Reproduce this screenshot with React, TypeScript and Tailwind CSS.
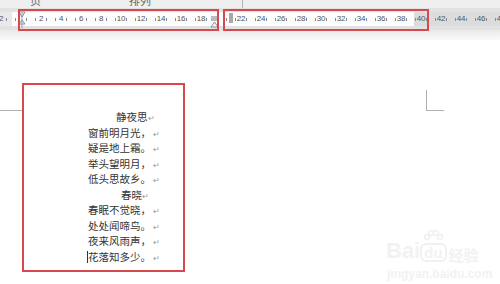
const poem: { text: string; indent: string; title?: boolean; cursor?: boolean }[] = [
  { text: "静夜思", indent: "pl-[28px]", title: true },
  { text: "窗前明月光，", indent: "pl-0" },
  { text: "疑是地上霜。", indent: "pl-0" },
  { text: "举头望明月，", indent: "pl-0" },
  { text: "低头思故乡。", indent: "pl-0" },
  { text: "春晓", indent: "pl-[33px]", title: true },
  { text: "春眠不觉晓，", indent: "pl-0" },
  { text: "处处闻啼鸟。", indent: "pl-0" },
  { text: "夜来风雨声，", indent: "pl-0" },
  { text: "花落知多少。", indent: "pl-0", cursor: true },
];

const marks = [-2, 0, 2, 4, 6, 8, 10, 12, 14, 16, 18, 20, 22, 24, 26, 28, 30, 32, 34, 36, 38, 40, 42, 44, 46, 48];

const Tick = () => <span className="w-px h-[3px] bg-[#8a8a8a]" />;

const Ruler = () => {
  return (
    <div className="relative h-[22px] bg-[#e2e2e2] py-[4px]">
      <div className="h-[14px] bg-[linear-gradient(to_right,#e9e9e9_21px,#fdfdfd_21px,#fdfdfd_423px,#dcdcdc_423px)] flex items-center -ml-[9px] overflow-hidden">
        {marks.map((n) => (
          <div key={n} className="w-[20px] shrink-0 flex items-center justify-between px-[4px]">
            <Tick />
            <span className="text-[8px] leading-none text-[#555] tracking-[-0.3px]">
              {n === 0 || n === 20 ? "" : Math.abs(n)}
            </span>
            <Tick />
          </div>
        ))}
      </div>
      {/* left indent marker */}
      <svg className="absolute left-[18px] top-[3px]" width="8" height="18" viewBox="0 0 8 18">
        <path d="M1 1 L7 1 L4 6 Z" fill="#f4f4f4" stroke="#7a7a7a" strokeWidth="0.8" />
        <path d="M4 9 L7 13 L1 13 Z" fill="#f4f4f4" stroke="#7a7a7a" strokeWidth="0.8" />
        <line x1="4" y1="2" x2="4" y2="17" stroke="#6c8fc4" strokeWidth="0.8" />
      </svg>
      {/* right indent marker */}
      <svg className="absolute left-[210px] top-[8px]" width="9" height="13" viewBox="0 0 9 13">
        <rect x="1" y="0" width="6" height="5" fill="#bcbcbc" />
        <path d="M4.5 6 L8 11 L1 11 Z" fill="#f6f6f6" stroke="#7a7a7a" strokeWidth="0.8" />
      </svg>
      {/* tab marker */}
      <div className="absolute left-[229px] top-[5px] w-[4px] h-[10px] bg-[#a9a9a9]" />
      {/* annotation boxes */}
      <div className="absolute left-[18px] top-[1px] w-[201px] h-[22px] border-2 border-[#d6494f]" />
      <div className="absolute left-[223px] top-[1px] w-[206px] h-[22px] border-2 border-[#d6494f]" />
    </div>
  );
};

const BaiduMark = () => (
  <div className="absolute left-[386px] top-[190px] flex flex-col items-start text-[#f2f2f2] select-none">
    <div className="flex items-end font-bold">
      <span className="text-[22px] leading-none">Bai</span>
      <span className="relative flex flex-col items-center">
        <svg width="22" height="12" viewBox="0 0 22 12" className="mb-[1px]">
          <circle cx="5" cy="7" r="2.5" fill="none" stroke="#f0f0f0" strokeWidth="1.5" />
          <circle cx="9" cy="3" r="2.5" fill="none" stroke="#f0f0f0" strokeWidth="1.5" />
          <circle cx="14" cy="3" r="2.5" fill="none" stroke="#f0f0f0" strokeWidth="1.5" />
          <circle cx="18" cy="7" r="2.5" fill="none" stroke="#f0f0f0" strokeWidth="1.5" />
        </svg>
        <span className="text-[15px] leading-none border-2 border-[#f0f0f0] rounded-[6px] px-[2px]">du</span>
      </span>
      <span className="text-[15px] leading-none ml-[2px] font-['Noto_Sans_CJK_SC']">经验</span>
    </div>
    <span className="text-[12px] leading-none mt-[6px] ml-[1px] font-bold">jingyan.baidu.com</span>
  </div>
);

export default function App() {
  return (
    <div className="w-[500px] h-[284px] bg-white overflow-hidden flex flex-col font-['Liberation_Sans','Noto_Sans_CJK_SC',sans-serif]">
      <div className="relative h-[8px] bg-[#efefef] flex overflow-hidden text-[11px] leading-none text-[#666] font-['Noto_Sans_CJK_SC',sans-serif]">
        <span className="ml-[30px] -mt-[5px]">页</span>
        <span className="ml-[88px] -mt-[5px]">排列</span>
        <span className="ml-[91px] w-px h-full bg-[#b5b5b5]" />
      </div>
      <Ruler />
      <div className="h-[10px] bg-[linear-gradient(to_bottom,#e9e9e9,#fafafa)]" />
      <div className="relative flex-1">
        <div className="absolute left-0 top-[70px] w-[22px] h-px bg-[#b0b0b0]" />
        <div className="absolute left-[426px] top-[50px] w-[18px] h-[21px] border-l border-b border-[#b0b0b0]" />
        <div className="ml-[22px] mt-[43px] w-[163px] h-[189px] border-2 border-[#d6494f] pt-[24px] pl-[64px]">
          <div className="flex flex-col items-start font-['Noto_Sans_CJK_SC',sans-serif] text-[10.5px] text-[#333]">
            {poem.map((line, i) => (
              <div key={i} className={`h-[15.5px] leading-[15.5px] whitespace-nowrap ${line.indent}`}>
                {line.cursor && <span className="inline-block w-px h-[12px] bg-[#333] align-[-2px] -ml-px" />}
                {line.text}
                {!line.title && <span className="inline-block w-[2px]" />}
                <span className="text-[8px] text-[#9a9a9a]">↵</span>
              </div>
            ))}
          </div>
        </div>
        <BaiduMark />
      </div>
    </div>
  );
}
